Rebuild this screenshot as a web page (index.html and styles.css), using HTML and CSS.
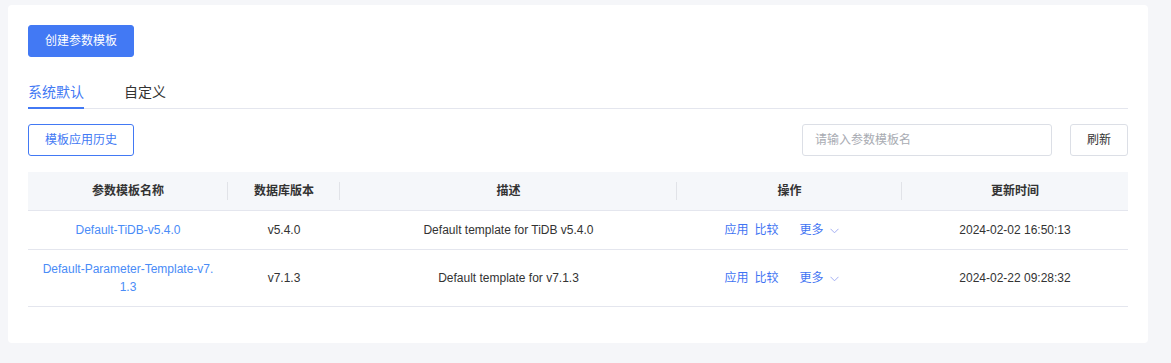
FILE: index.html
```html
<!DOCTYPE html>
<html lang="zh-CN">
<head>
<meta charset="utf-8">
<title>参数模板</title>
<link rel="stylesheet" href="styles.css">
</head>
<body>
<div class="card">
  <div class="top-actions">
    <button class="btn btn-primary">创建参数模板</button>
  </div>
  <div class="tabs">
    <div class="tab active">系统默认</div>
    <div class="tab">自定义</div>
  </div>
  <div class="toolbar">
    <button class="btn btn-outline">模板应用历史</button>
    <div class="toolbar-right">
      <input class="search" type="text" placeholder="请输入参数模板名">
      <button class="btn btn-default">刷新</button>
    </div>
  </div>
  <table class="table">
    <colgroup>
      <col class="c-name">
      <col class="c-ver">
      <col class="c-desc">
      <col class="c-ops">
      <col class="c-time">
    </colgroup>
    <thead>
      <tr>
        <th class="sep">参数模板名称</th>
        <th class="sep">数据库版本</th>
        <th class="sep">描述</th>
        <th class="sep">操作</th>
        <th>更新时间</th>
      </tr>
    </thead>
    <tbody>
      <tr>
        <td><a class="name-link">Default-TiDB-v5.4.0</a></td>
        <td>v5.4.0</td>
        <td>Default template for TiDB v5.4.0</td>
        <td>
          <div class="ops">
            <a class="op">应用</a><a class="op op-gap">比较</a><a class="op more">更多<svg class="chev" width="9" height="6" viewBox="0 0 9 6"><path d="M0.5 0.8 L4.5 4.8 L8.5 0.8" fill="none" stroke="#a3aef2" stroke-width="1"/></svg></a>
          </div>
        </td>
        <td>2024-02-02 16:50:13</td>
      </tr>
      <tr>
        <td><a class="name-link">Default-Parameter-Template-v7.1.3</a></td>
        <td>v7.1.3</td>
        <td>Default template for v7.1.3</td>
        <td>
          <div class="ops">
            <a class="op">应用</a><a class="op op-gap">比较</a><a class="op more">更多<svg class="chev" width="9" height="6" viewBox="0 0 9 6"><path d="M0.5 0.8 L4.5 4.8 L8.5 0.8" fill="none" stroke="#a3aef2" stroke-width="1"/></svg></a>
          </div>
        </td>
        <td>2024-02-22 09:28:32</td>
      </tr>
    </tbody>
  </table>
</div>
</body>
</html>
```
FILE: styles.css
```css
* { box-sizing: border-box; }

html, body {
  margin: 0;
  padding: 0;
  background: #f5f6f9;
  font-family: "Liberation Sans", "Noto Sans CJK SC", sans-serif;
  color: #333333;
  font-size: 12px;
}

body {
  padding: 5px 23px 20px 8px;
}

.card {
  width: 1140px;
  height: 338px;
  background: #ffffff;
  border-radius: 4px;
  padding: 20px 20px 0 20px;
}

.top-actions {
  display: flex;
}

.btn {
  height: 32px;
  padding: 0 16px;
  border-radius: 3px;
  font-family: inherit;
  font-size: 12px;
  line-height: 30px;
  cursor: pointer;
  background: #ffffff;
}

.btn-primary {
  background: #4279f4;
  border: 1px solid #4279f4;
  color: #ffffff;
}

.btn-outline {
  border: 1px solid #4279f4;
  color: #4279f4;
}

.btn-default {
  border: 1px solid #dcdfe6;
  color: #333333;
}

.tabs {
  display: flex;
  gap: 40px;
  margin-top: 24px;
  border-bottom: 1px solid #e4e6ee;
}

.tab {
  position: relative;
  font-size: 14px;
  line-height: 22px;
  padding-bottom: 5px;
  color: #333333;
}

.tab.active {
  color: #4279f4;
}

.tab.active::after {
  content: "";
  position: absolute;
  left: 0;
  right: 0;
  bottom: -1px;
  height: 2px;
  background: #4279f4;
}

.toolbar {
  display: flex;
  justify-content: space-between;
  align-items: center;
  margin-top: 15px;
}

.toolbar-right {
  display: flex;
  gap: 18px;
}

.search {
  width: 250px;
  height: 32px;
  border: 1px solid #dcdfe6;
  border-radius: 3px;
  padding: 0 12px;
  font-family: inherit;
  font-size: 12px;
  color: #333333;
  outline: none;
}

.search::placeholder {
  color: #a8abb2;
}

.table {
  width: 1100px;
  margin-top: 16px;
  border-collapse: collapse;
  table-layout: fixed;
}

.c-name { width: 200px; }
.c-ver { width: 112px; }
.c-desc { width: 337px; }
.c-ops { width: 225px; }
.c-time { width: 226px; }

.table th,
.table td {
  padding: 10px 12px;
  line-height: 18px;
  text-align: center;
  font-size: 12px;
  border-bottom: 1px solid #e4e6ee;
  word-break: break-all;
}

.table th {
  position: relative;
  background: #f5f7fa;
  font-weight: bold;
  color: #333333;
}

.table th.sep::after {
  content: "";
  position: absolute;
  right: 0;
  top: 10px;
  width: 1px;
  height: 18px;
  background: #e1e3e8;
}

.table td {
  color: #333333;
}

.name-link {
  color: #4a8cf7;
  cursor: pointer;
}

.ops {
  display: flex;
  justify-content: center;
  align-items: center;
  padding-right: 16px;
}

.op {
  color: #3f74f3;
  cursor: pointer;
}

.op-gap {
  margin-left: 6px;
  margin-right: 21px;
}

.more {
  display: flex;
  align-items: center;
}

.chev {
  margin-left: 6px;
  margin-top: 1px;
}
```
